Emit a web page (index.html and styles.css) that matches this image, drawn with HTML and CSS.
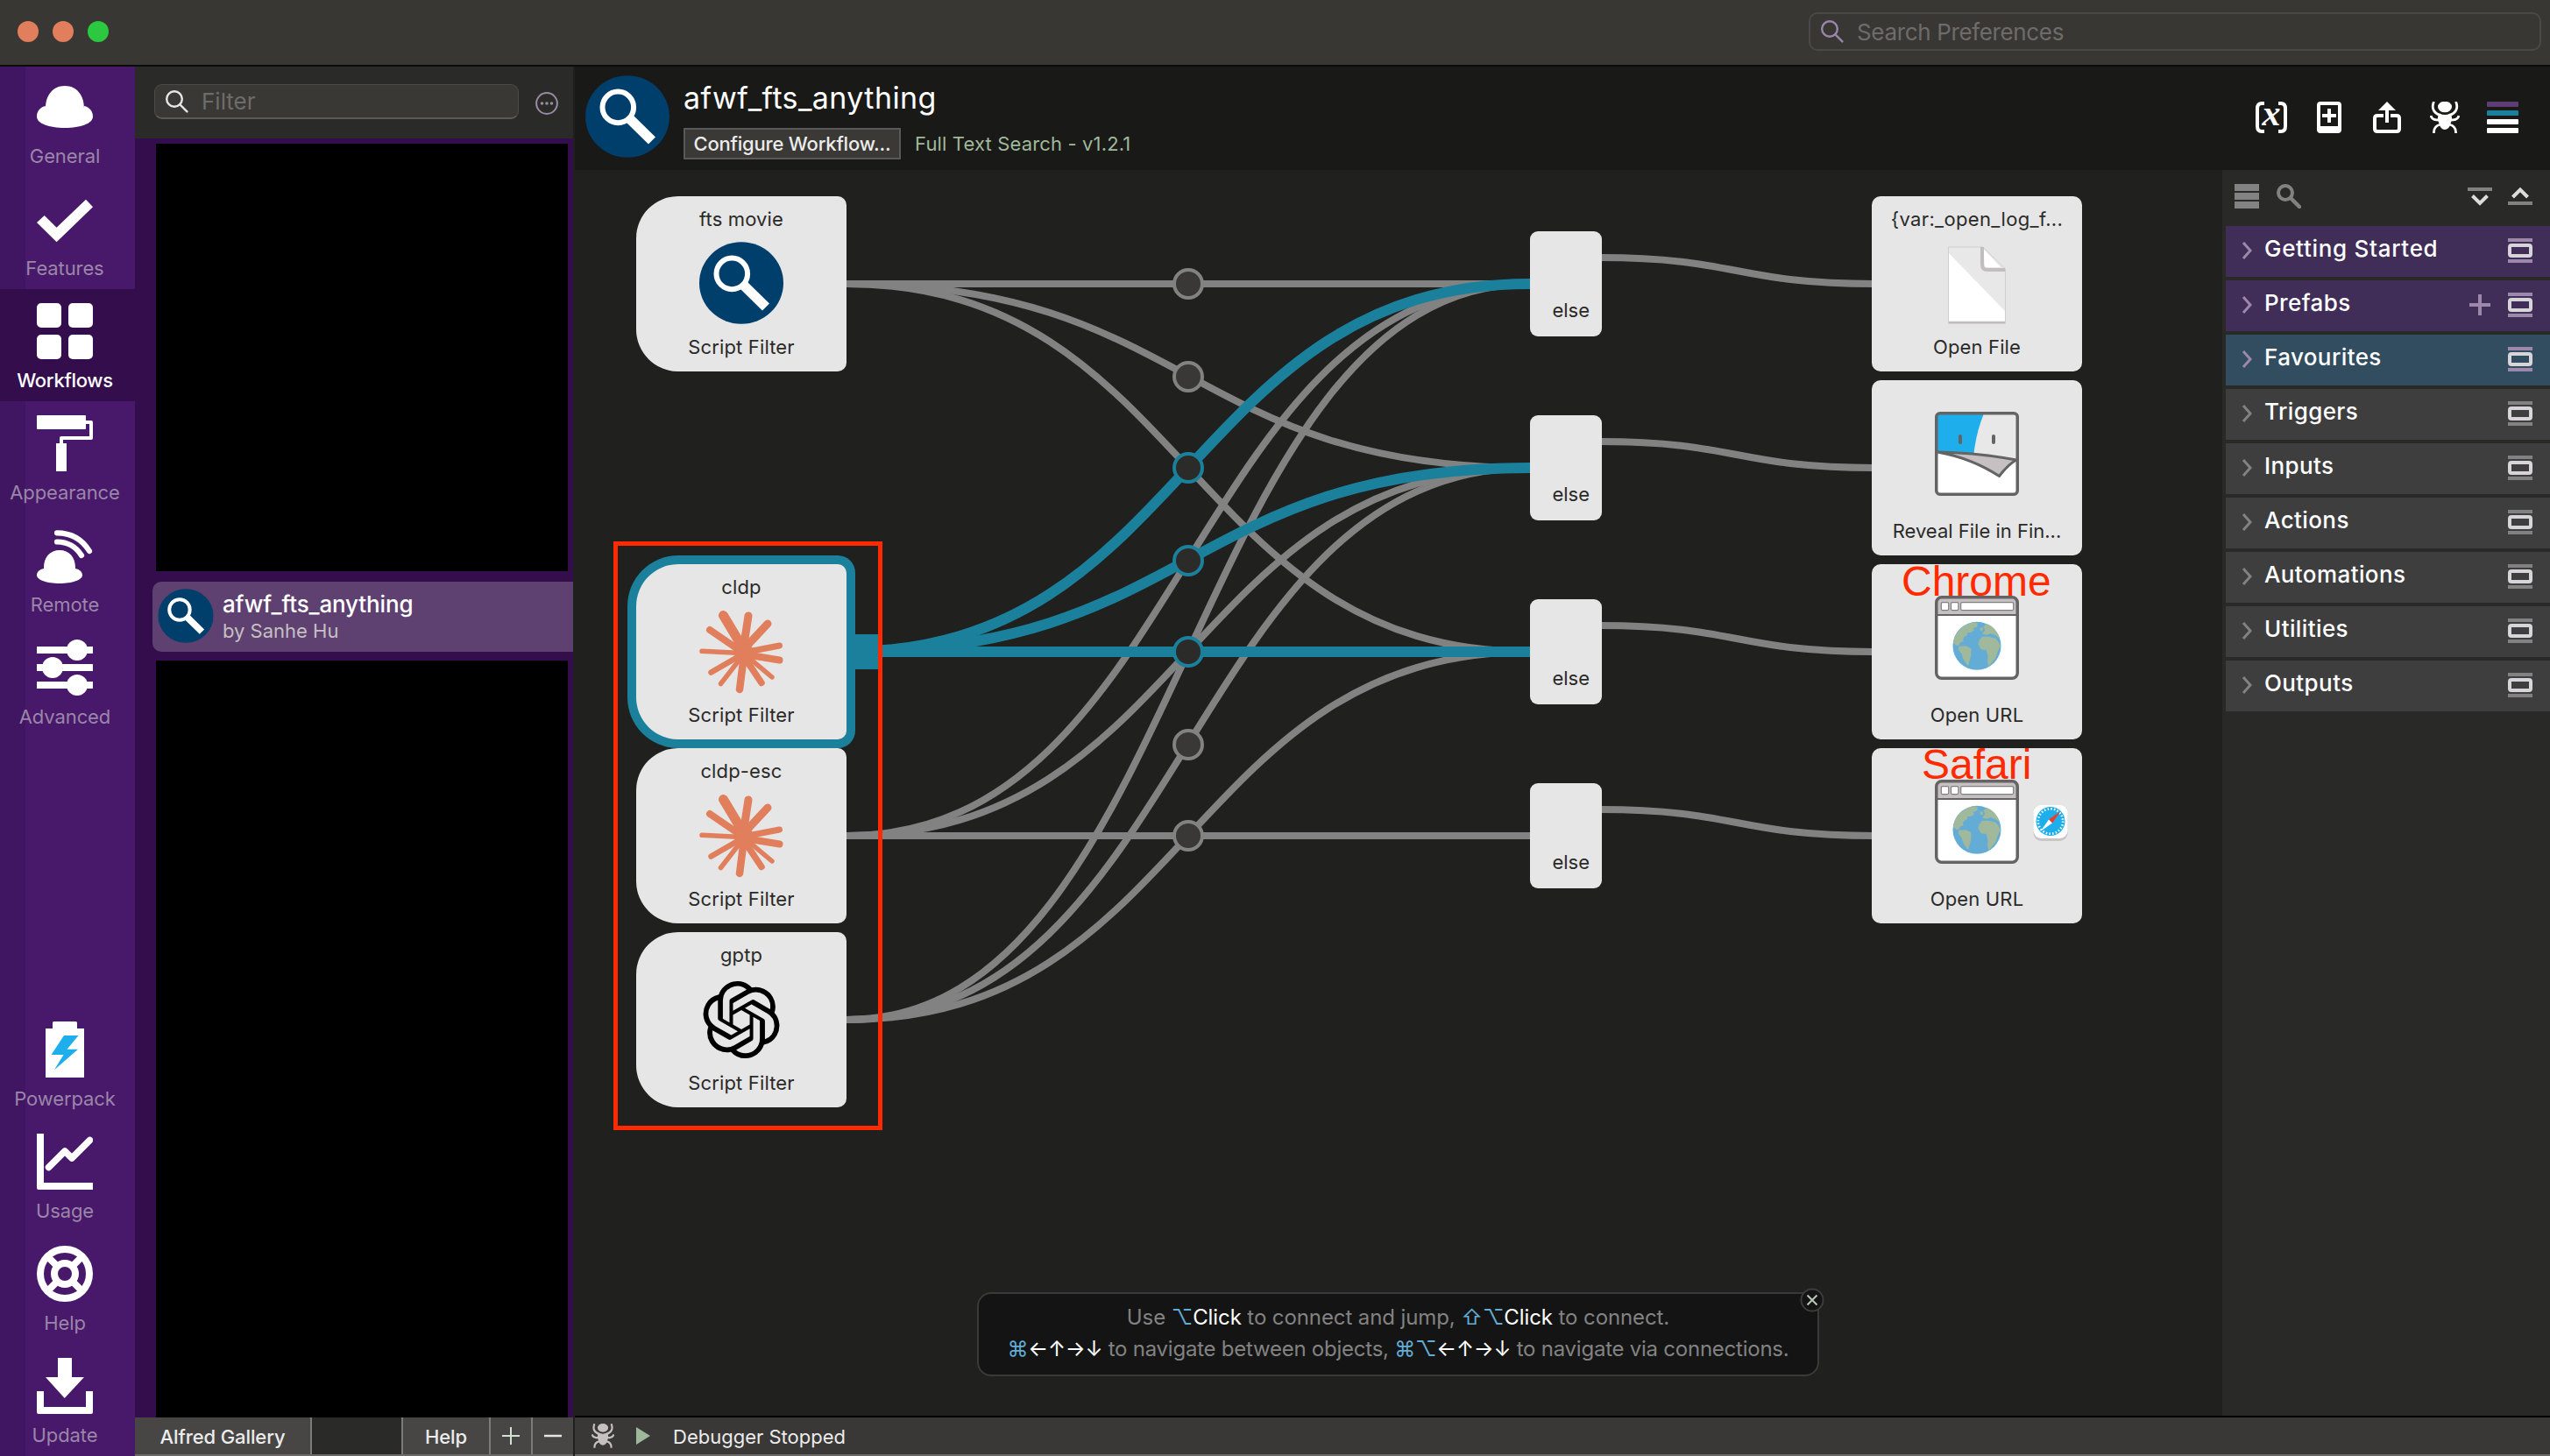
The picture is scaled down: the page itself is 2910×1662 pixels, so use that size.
FILE: index.html
```html
<!DOCTYPE html>
<html lang="en">
<head>
<meta charset="utf-8">
<title>Alfred Preferences</title>
<link rel="stylesheet" href="styles.css">
</head>
<body>
<svg class="defs" width="0" height="0" aria-hidden="true">
  <defs>
    <symbol id="i-lens" viewBox="0 0 26 26"><circle cx="10" cy="10" r="8.8"/><path d="M16.4 16.4L24.4 24.4"/></symbol>
    <symbol id="i-fts" viewBox="0 0 96 94">
      <ellipse cx="48" cy="47" rx="48" ry="46.8" fill="#003e6b"/>
      <circle cx="37.3" cy="36.4" r="17.8" fill="none" stroke="#fff" stroke-width="6"/>
      <path d="M49.5 48.5L76 74.5" stroke="#fff" stroke-width="11.5"/>
    </symbol>
    <symbol id="i-burst" viewBox="0 0 96 96">
      <g stroke="#e17e5b" stroke-linecap="round" fill="#e17e5b">
        <path stroke-width="11" d="M27.5 6.5L50 44"/>
        <path stroke-width="9" d="M56 7L50 46"/>
        <path stroke-width="9" d="M78 16L50 46"/>
        <path stroke-width="7" d="M91.5 41L50 49"/>
        <path stroke-width="8" d="M91.5 57.5L52 51"/>
        <path stroke-width="5.5" d="M83 77L52 51"/>
        <path stroke-width="7.5" d="M71 83.500L50 52"/>
        <path stroke-width="8.500" d="M46 91L51 52"/>
        <path stroke-width="5.5" d="M24.500 84.500L49 53"/>
        <path stroke-width="6.500" d="M13.500 71.500L49 51"/>
        <path stroke-width="5.5" d="M3 47.300L48 49.500"/>
        <path stroke-width="8" d="M12 23L47 47"/>
        <circle cx="51" cy="49" r="11" stroke="none"/>
      </g>
    </symbol>
    <symbol id="i-knot" viewBox="0 0 24 24"><path d="M22.2819 9.8211a5.9847 5.9847 0 0 0-.5157-4.9108 6.0462 6.0462 0 0 0-6.5098-2.9A6.0651 6.0651 0 0 0 4.9807 4.1818a5.9847 5.9847 0 0 0-3.9977 2.9 6.0462 6.0462 0 0 0 .7427 7.0966 5.98 5.98 0 0 0 .511 4.9107 6.051 6.051 0 0 0 6.5146 2.9001A5.9847 5.9847 0 0 0 13.2599 24a6.0557 6.0557 0 0 0 5.7718-4.2058 5.9894 5.9894 0 0 0 3.9977-2.9001 6.0557 6.0557 0 0 0-.7475-7.0729zm-9.022 12.6081a4.4755 4.4755 0 0 1-2.8764-1.0408l.1419-.0804 4.7783-2.7582a.7948.7948 0 0 0 .3927-.6813v-6.7369l2.02 1.1686a.071.071 0 0 1 .038.052v5.5826a4.504 4.504 0 0 1-4.4945 4.4944zm-9.6607-4.1254a4.4708 4.4708 0 0 1-.5346-3.0137l.142.0852 4.783 2.7582a.7712.7712 0 0 0 .7806 0l5.8428-3.3685v2.3324a.0804.0804 0 0 1-.0332.0615L9.74 19.9502a4.4992 4.4992 0 0 1-6.1408-1.6464zM2.3408 7.8956a4.485 4.485 0 0 1 2.3655-1.9728V11.6a.7664.7664 0 0 0 .3879.6765l5.8144 3.3543-2.0201 1.1685a.0757.0757 0 0 1-.071 0l-4.8303-2.7865A4.504 4.504 0 0 1 2.3408 7.872zm16.5963 3.8558L13.1038 8.364 15.1192 7.2a.0757.0757 0 0 1 .071 0l4.8303 2.7913a4.4944 4.4944 0 0 1-.6765 8.1042v-5.6772a.79.79 0 0 0-.407-.667zm2.0107-3.0231l-.142-.0852-4.7735-2.7818a.7759.7759 0 0 0-.7854 0L9.409 9.2297V6.8974a.0662.0662 0 0 1 .0284-.0615l4.8303-2.7866a4.4992 4.4992 0 0 1 6.6802 4.66zM8.3065 12.863l-2.02-1.1638a.0804.0804 0 0 1-.038-.0567V6.0742a4.4992 4.4992 0 0 1 7.3757-3.4537l-.142.0805L8.704 5.459a.7948.7948 0 0 0-.3927.6813zm1.0976-2.3654l2.602-1.4998 2.6069 1.4998v2.9994l-2.5974 1.4997-2.6067-1.4997Z"/></symbol>
    <symbol id="i-web" viewBox="0 0 96 96">
      <rect x="1.75" y="1.75" width="92.500" height="92.500" rx="6" fill="#fff"/>
      <path d="M2 22V8a6 6 0 0 1 6-6H88a6 6 0 0 1 6 6V22Z" fill="#c6c0c3"/>
      <path d="M2 22H94" stroke="#646464" stroke-width="2"/>
      <g fill="#fff" stroke="#7f7f7f" stroke-width="1.200"><rect x="7.300" y="7.600" width="8.400" height="9" rx="1.500"/><rect x="18.500" y="7.600" width="8.400" height="9" rx="1.500"/><rect x="29.700" y="7.600" width="60" height="9" rx="1.500"/></g>
      <rect x="1.75" y="1.75" width="92.500" height="92.500" rx="6" fill="none" stroke="#646464" stroke-width="3.500"/>
      <circle cx="48" cy="57.300" r="27.500" fill="#62acd6"/>
      <g transform="scale(.33333) translate(-54 -120)" fill="#a0b89b">
        <path d="M187 211L200 214V226L184 232L190 238L178 246L165 246L166 254L154 262L150 270L153 276L140 281L136 290L128 290L117 283C120 250 145 218 187 211Z"/>
        <path d="M136 293L160 292L178 300V325L173 342L168 361L160 350L152 338L146 320L134 303Z"/>
        <path d="M216 251L226 236L220 226L232 216C255 224 270 245 277 268L262 256L245 250L232 254Z"/>
        <path d="M202 286L206 272L216 260H240L262 266L271 276L279 292L270 310L262 334L238 362L234 345L236 330L230 306L212 304Z"/>
        <path d="M210 228L220 230L217 242L208 238Z"/>
      </g>
    </symbol>
    <symbol id="i-bug" viewBox="0 0 34 36">
      <ellipse cx="17" cy="6" rx="8" ry="6.300"/>
      <path d="M11 13.500Q17 16.500 23 13.500Q27 18 23.500 25Q22 32 17 32Q12 32 10.500 25Q7 18 11 13.500Z"/>
      <g fill="none" stroke="currentColor" stroke-width="2.800"><path d="M4.500 0C1 8 5 13.500 12 15.500M29.500 0C33 8 29 13.500 22 15.500M1 16C2 21 7 21 11 21M33 16C32 21 27 21 23 21M4.500 36C4 30 8 27 12 26M29.500 36C30 30 26 27 22 26"/></g>
    </symbol>
    <symbol id="i-drag" viewBox="0 0 28 28"><path d="M0 0H28V4H0ZM0 24H28V28H0Z"/><rect x="2" y="8" width="24" height="12" rx="2" fill="none" stroke="#d8d5da" stroke-width="4"/></symbol>
    <symbol id="i-chev" viewBox="0 0 12 20"><path d="M2 1L10 10L2 19" fill="none" stroke="currentColor" stroke-width="3"/></symbol>
  </defs>
</svg>

<header class="titlebar">
  <div class="lights"><i></i><i></i><i class="green"></i></div>
  <div class="search"><svg class="lens" width="26" height="26"><use href="#i-lens"/></svg><span>Search Preferences</span></div>
</header>

<div class="window">
  <nav class="sidebar">
    <div class="item first"><svg viewBox="0 0 64 64"><path d="M10 34C10 19 18 8 32 8S54 19 54 34L54 31C60 32 64 37 64 43C64 51 50 56 32 56S0 51 0 43C0 37 4 32 10 31Z"/></svg><span>General</span></div>
    <div class="item"><svg viewBox="0 0 64 64"><path d="M0 36L8.700 28L22.600 41.700L56 9.700L64 18.300L22.600 58.300Z"/></svg><span>Features</span></div>
    <div class="item active"><svg viewBox="0 0 64 64"><rect width="28" height="28" rx="5"/><rect x="36" width="28" height="28" rx="5"/><rect y="36" width="28" height="28" rx="5"/><rect x="36" y="36" width="28" height="28" rx="5"/></svg><span>Workflows</span></div>
    <div class="item"><svg viewBox="0 0 64 64"><rect width="56" height="16" rx="1"/><path d="M56 8H62V26H28V33" fill="none" stroke="#fff" stroke-width="4" stroke-linejoin="round"/><path d="M22 32H34V64H22Z"/></svg><span>Appearance</span></div>
    <div class="item"><svg viewBox="0 0 64 64"><path d="M8 46C8 34 15 26 26 26S44 34 44 46L44 47C49 48 52 51 52 54.500C52 60 40 64 26 64S0 60 0 54.500C0 51 3 48 8 47Z"/><path d="M23 6.300C40 6.300 52 14 60 27M23 16.500C35 16.500 44 21 51 32" fill="none" stroke="#fff" stroke-width="6.200" stroke-linecap="round"/></svg><span>Remote</span></div>
    <div class="item"><svg viewBox="0 0 64 64"><path d="M0 8H64V16H0ZM0 28H64V36H0ZM0 48H64V56H0Z"/><circle cx="46" cy="12" r="12"/><circle cx="18" cy="32" r="12"/><circle cx="46" cy="52" r="12"/></svg><span>Advanced</span></div>
    <div class="item push"><svg viewBox="0 0 64 64"><path d="M18 8V1.500Q18 0 19.500 0H44.500Q46 0 46 1.500V8H54V64H10V8Z"/><path fill="#1eaeec" d="M31 16H47.500L34.500 31.800H47L20 55.300L30.500 38H16.500Z"/></svg><span>Powerpack</span></div>
    <div class="item"><svg viewBox="0 0 64 64"><path d="M0 0H8V56H64V64H2Q0 64 0 62Z"/><path d="M13.500 38.500L32 20L40 28L60.500 7.500" fill="none" stroke="#fff" stroke-width="7.500" stroke-linecap="round" stroke-linejoin="round"/></svg><span>Usage</span></div>
    <div class="item"><svg viewBox="0 0 64 64"><g fill="none" stroke="#fff" stroke-width="8"><circle cx="32" cy="32" r="28"/><circle cx="32" cy="32" r="12"/><path d="M12 12L23 23M52 12L41 23M12 52L23 41M52 52L41 41"/></g></svg><span>Help</span></div>
    <div class="item"><svg viewBox="0 0 64 64"><path d="M24 0H40V22H54L31.700 46L10 22H24Z"/><path d="M0 38H8V56H56V38H64V62Q64 64 62 64H2Q0 64 0 62Z"/></svg><span>Update</span></div>
  </nav>

  <section class="library">
    <div class="filterbar">
      <div class="filter"><svg class="lens" width="26" height="26"><use href="#i-lens"/></svg><span>Filter</span></div>
      <svg class="more" width="26" height="26" viewBox="0 0 26 26"><circle cx="13" cy="13" r="11.900" fill="none" stroke="#9a8aa4" stroke-width="2"/><circle cx="7.500" cy="13" r="1.800"/><circle cx="13" cy="13" r="1.800"/><circle cx="18.500" cy="13" r="1.800"/></svg>
    </div>
    <div class="list">
      <div class="redacted upper"></div>
      <div class="entry">
        <svg width="64" height="62" viewBox="0 0 96 94"><use href="#i-fts"/></svg>
        <div class="names"><b>afwf_fts_anything</b><span>by Sanhe Hu</span></div>
      </div>
      <div class="redacted lower"></div>
    </div>
    <footer class="actions">
      <span class="btn gallery">Alfred Gallery</span><span class="gap"></span><span class="btn help">Help</span>
      <span class="btn sq"><svg width="22" height="22" viewBox="0 0 22 22"><path d="M11 1V21M1 11H21" stroke="#d4e0d2" stroke-width="2"/></svg></span>
      <span class="btn sq last"><svg width="22" height="22" viewBox="0 0 22 22"><path d="M1 11H21" stroke="#e4e4e4" stroke-width="2.500"/></svg></span>
    </footer>
  </section>

  <main class="editor">
    <div class="head">
      <svg class="logo" width="96" height="94"><use href="#i-fts"/></svg>
      <div class="meta">
        <h1>afwf_fts_anything</h1>
        <div class="sub"><span class="configure">Configure Workflow...</span><span class="about">Full Text Search - v1.2.1</span></div>
      </div>
      <div class="tools">
        <svg width="36" height="36" viewBox="0 0 36 36"><path d="M10 2H7Q2 2 2 8V28Q2 34 7 34H10M26 2H29Q34 2 34 8V28Q34 34 29 34H26" fill="none" stroke="#fff" stroke-width="4"/><text class="varx" x="18" y="27" text-anchor="middle">x</text></svg>
        <svg width="28" height="36" viewBox="0 0 28 36"><path fill-rule="evenodd" d="M4 0H24Q28 0 28 4V32Q28 36 24 36H4Q0 36 0 32V4Q0 0 4 0ZM4 4V28H24V4Z"/><path d="M12 8H16V14H22V18H16V24H12V18H6V14H12Z"/></svg>
        <svg width="32" height="36" viewBox="0 0 32 36"><path d="M16 0L26 10H18V24H14V10H6Z"/><path d="M12 16H5Q2 16 2 19V31Q2 34 5 34H27Q30 34 30 31V19Q30 16 27 16H20" fill="none" stroke="#fff" stroke-width="4"/></svg>
        <svg width="34" height="36"><use href="#i-bug"/></svg>
        <svg width="36" height="36" viewBox="0 0 36 36"><rect width="36" height="6" rx="1" fill="#5d3d73"/><rect y="10" width="36" height="6" rx="1" fill="#1b809b"/><rect y="20" width="36" height="6" rx="1"/><rect y="30" width="36" height="6" rx="1"/></svg>
      </div>
    </div>

    <div class="body">
      <div class="canvas">
        <svg class="wires" viewBox="656 194 1880 1422" width="1880" height="1422">
          <g class="wire">
            <path d="M960 324H1750"/>
            <path d="M966 324C1356 324 1356 534 1746 534"/>
            <path d="M966 324C1356 324 1356 744 1746 744"/>
            <path d="M966 954C1356 954 1356 324 1746 324"/>
            <path d="M966 954C1356 954 1356 534 1746 534"/>
            <path d="M960 954H1750"/>
            <path d="M966 1164C1356 1164 1356 324 1746 324"/>
            <path d="M966 1164C1356 1164 1356 534 1746 534"/>
            <path d="M966 1164C1356 1164 1356 744 1746 744"/>
            <path d="M1826 294C1982 294 1982 324 2138 324"/>
            <path d="M1826 504C1982 504 1982 534 2138 534"/>
            <path d="M1826 714C1982 714 1982 744 2138 744"/>
            <path d="M1826 924C1982 924 1982 954 2138 954"/>
          </g>
          <g class="wire hot">
            <path d="M966 744C1356 744 1356 324 1746 324"/>
            <path d="M966 744C1356 744 1356 534 1746 534"/>
            <path d="M966 744H1750"/>
          </g>
          <g class="knob"><circle cx="1356" cy="324" r="16"/><circle cx="1356" cy="430" r="16"/><circle cx="1356" cy="850" r="16"/><circle cx="1356" cy="954" r="16"/></g>
          <g class="knob hot"><circle cx="1356" cy="534" r="16"/><circle cx="1356" cy="640" r="16"/><circle cx="1356" cy="744" r="16"/></g>
          <rect x="970" y="724" width="34" height="40" rx="3" fill="#1b809b"/>
        </svg>

        <div class="node script c1 r1"><span class="t">fts movie</span><svg width="96" height="94"><use href="#i-fts"/></svg><span class="l">Script Filter</span></div>
        <div class="node script c1 r3 selected"><span class="t">cldp</span><svg width="96" height="96"><use href="#i-burst"/></svg><span class="l">Script Filter</span></div>
        <div class="node script c1 r4"><span class="t">cldp-esc</span><svg width="96" height="96"><use href="#i-burst"/></svg><span class="l">Script Filter</span></div>
        <div class="node script c1 r5"><span class="t">gptp</span><svg class="knot" width="88" height="88"><use href="#i-knot"/></svg><span class="l">Script Filter</span></div>

        <div class="else e1">else</div><div class="else e2">else</div><div class="else e3">else</div><div class="else e4">else</div>

        <div class="node c3 r1"><span class="t wide">{var:_open_log_f...</span>
          <svg width="96" height="96" viewBox="0 0 96 96"><path d="M15.500 92H80.500" stroke="#bdb9bb" stroke-width="3"/><path d="M15.500 6H55L80.500 31V91H15.500Z" fill="#e9e8e9" stroke="#d0cecf"/><path d="M16 13L80 79V90.500H16Z" fill="#fff"/><path d="M54 6V26Q54 32 60 32H80" fill="none" stroke="#c2bec0" stroke-width="4"/><path d="M56 9Q56 27 57.500 29H75Z" fill="#fff"/></svg>
          <span class="l">Open File</span></div>
        <div class="node c3 r2 bare">
          <svg width="96" height="96" viewBox="0 0 96 96"><rect x="1.75" y="1.75" width="92.500" height="92.500" rx="4" fill="#fff"/><path d="M2 2H94V55Q50 46 2 46Z" fill="#e9e8e9"/><path d="M2 2H56Q47 24 44.500 48Q22 46 2 46Z" fill="#1eaeec"/><path d="M3 46Q50 47 93 55Q84 60 73.500 73.500Q42 53 3 46Z" fill="#c6c0c3" stroke="#646464" stroke-width="3" stroke-linejoin="round"/><path d="M29 28V35M67 28V35" stroke="#646464" stroke-width="4" stroke-linecap="round"/><rect x="1.75" y="1.75" width="92.500" height="92.500" rx="4" fill="none" stroke="#646464" stroke-width="3.500"/></svg>
          <span class="l reveal">Reveal File in Fin...</span></div>
        <div class="node c3 r3 bare"><svg width="96" height="96"><use href="#i-web"/></svg><span class="l">Open URL</span></div>
        <div class="node c3 r4 bare"><svg width="96" height="96"><use href="#i-web"/></svg><span class="l">Open URL</span>
          <svg class="safari" width="40" height="41" viewBox="0 0 40 41"><rect x=".5" y="3" width="39" height="38" rx="9" fill="#c9c6c8"/><rect x=".5" width="39" height="38" rx="9" fill="#fff"/><circle cx="20" cy="18.500" r="16.500" fill="#1eaeec"/><circle cx="20" cy="18.500" r="14.200" fill="none" stroke="#fff" stroke-width="2.600" stroke-dasharray="1.500 2.210"/><path d="M31.500 7L22 20.500L18 16.500Z" fill="#ee3b24"/><path d="M8.500 30L18 16.500L22 20.500Z" fill="#fff"/></svg></div>

        <div class="frame"></div>
        <div class="note chrome">Chrome</div>
        <div class="note saf">Safari</div>

        <div class="hint">
          <p>Use <em>⌥</em><b>Click</b> to connect and jump, <em>⇧⌥</em><b>Click</b> to connect.</p>
          <p class="keys"><em>⌘</em><b>←↑→↓</b> to navigate between objects, <em>⌘⌥</em><b>←↑→↓</b> to navigate via connections.</p>
          <svg class="close" width="28" height="28" viewBox="0 0 28 28"><circle cx="14" cy="14" r="12.500" fill="#141414" stroke="#3c3c3a" stroke-width="2"/><path d="M8.500 8.500L19.500 19.500M19.500 8.500L8.500 19.500" stroke="#b9c7b7" stroke-width="2"/></svg>
        </div>
      </div>

      <aside class="palette">
        <div class="bar">
          <svg width="28" height="28" viewBox="0 0 28 28"><path d="M0 0H28V8H0ZM0 10H28V18H0ZM0 20H28V28H0Z"/></svg>
          <svg width="28" height="28" viewBox="0 0 28 28"><circle cx="10" cy="10" r="8" fill="none" stroke="#828282" stroke-width="4"/><path d="M17 17L26 26" stroke="#828282" stroke-width="4.500" stroke-linecap="round"/></svg>
          <svg class="fold" width="28" height="28" viewBox="0 0 28 28"><path d="M0 4H28V8H0Z"/><path d="M5.500 13.500L14 22L22.500 13.500" fill="none" stroke="#dcdcdc" stroke-width="4"/></svg>
          <svg width="28" height="28" viewBox="0 0 28 28"><path d="M0 20H28V24H0Z"/><path d="M5.500 15L14 6.500L22.500 15" fill="none" stroke="#dcdcdc" stroke-width="4"/></svg>
        </div>
        <div class="cat violet"><svg class="ch" width="12" height="20"><use href="#i-chev"/></svg><span>Getting Started</span><svg class="dr" width="28" height="28"><use href="#i-drag"/></svg></div>
        <div class="cat violet"><svg class="ch" width="12" height="20"><use href="#i-chev"/></svg><span>Prefabs</span><svg class="plus" width="24" height="24" viewBox="0 0 24 24"><path d="M10 0H14V10H24V14H14V24H10V14H0V10H10Z"/></svg><svg class="dr" width="28" height="28"><use href="#i-drag"/></svg></div>
        <div class="cat blue"><svg class="ch" width="12" height="20"><use href="#i-chev"/></svg><span>Favourites</span><svg class="dr" width="28" height="28"><use href="#i-drag"/></svg></div>
        <div class="cat"><svg class="ch" width="12" height="20"><use href="#i-chev"/></svg><span>Triggers</span><svg class="dr" width="28" height="28"><use href="#i-drag"/></svg></div>
        <div class="cat"><svg class="ch" width="12" height="20"><use href="#i-chev"/></svg><span>Inputs</span><svg class="dr" width="28" height="28"><use href="#i-drag"/></svg></div>
        <div class="cat"><svg class="ch" width="12" height="20"><use href="#i-chev"/></svg><span>Actions</span><svg class="dr" width="28" height="28"><use href="#i-drag"/></svg></div>
        <div class="cat"><svg class="ch" width="12" height="20"><use href="#i-chev"/></svg><span>Automations</span><svg class="dr" width="28" height="28"><use href="#i-drag"/></svg></div>
        <div class="cat"><svg class="ch" width="12" height="20"><use href="#i-chev"/></svg><span>Utilities</span><svg class="dr" width="28" height="28"><use href="#i-drag"/></svg></div>
        <div class="cat"><svg class="ch" width="12" height="20"><use href="#i-chev"/></svg><span>Outputs</span><svg class="dr" width="28" height="28"><use href="#i-drag"/></svg></div>
      </aside>
    </div>

    <footer class="debug">
      <svg class="bug" width="26" height="28"><use href="#i-bug"/></svg>
      <svg width="16" height="20" viewBox="0 0 16 20"><path d="M0 0L16 10L0 20Z" fill="#9db89a"/></svg>
      <span>Debugger Stopped</span>
    </footer>
  </main>
</div>
</body>
</html>
```
FILE: styles.css
```css
* { box-sizing: border-box; }
html, body { margin: 0; height: 100%; }
body {
  display: flex; flex-direction: column;
  width: 2910px; height: 1662px; overflow: hidden;
  background: #20201e; color: #fff;
  font: 22px/26px Inter, "Noto Sans", sans-serif;
}
svg { display: block; flex: none; fill: currentColor; }
.defs { position: absolute; }
p, h1 { margin: 0; font-weight: 400; }
b { font-weight: 400; }

.titlebar {
  flex: none; height: 76px; padding: 0 10px 2px 20px;
  display: flex; align-items: center; justify-content: space-between;
  background: #393734; border-bottom: 2px solid #0b0b0a;
}
.lights { display: flex; gap: 16px; }
.lights i { width: 24px; height: 24px; border-radius: 50%; background: #e17e5b; }
.lights .green { background: #2bc840; }
.lens { fill: none; stroke: currentColor; stroke-width: 2.4; stroke-linecap: round; }
.search {
  width: 836px; height: 44px; padding: 0 12px; display: flex; align-items: center; gap: 15px;
  border: 2px solid #4a4947; border-radius: 10px; color: #9a86a8; font-size: 26px;
}
.search span, .filter span { color: #6e6c6a; }
.search span { letter-spacing: -.35px; margin-top: 2px; }

.window { flex: 1; display: flex; min-height: 0; }

.sidebar {
  width: 154px; flex: none; display: flex; flex-direction: column;
  background: linear-gradient(90deg, #401562 29px, #48186a 29px);
}
.item { height: 128px; padding: 16px 6px 0 0; display: flex; flex-direction: column; align-items: center; gap: 11px; color: #9a86a8; }
.item svg { width: 64px; height: 64px; fill: #fff; }
.item.first { height: 126px; padding-top: 14px; }
.item.active { background: #340d4d; color: #fff; }
.item.active span { font-weight: 500; letter-spacing: -.3px; }
.item span { letter-spacing: -.1px; }
.push { margin-top: auto; }

.library { width: 500px; flex: none; display: flex; flex-direction: column; background: #2a2a28; }
.filterbar { height: 82px; padding: 0 16px 2px 22px; display: flex; align-items: center; gap: 19px; }
.filter {
  width: 416px; height: 40px; padding: 0 12px; display: flex; align-items: center; gap: 15px;
  background: #3a3835; border: 1px solid #4c4b49; border-bottom: 2px solid #5b5a58; border-radius: 9px; font-size: 26px; color: #e6e6e6;
}
.more { fill: #9a8aa4; margin-top: 4px; }
.list { flex: 1; padding-top: 6px; display: flex; flex-direction: column; background: #340d4d; }
.redacted { background: #000; margin: 0 6px 0 24px; }
.upper { height: 488px; margin-bottom: 12px; }
.lower { flex: 1; margin-top: 10px; }
.entry { height: 80px; margin-left: 20px; padding: 0 0 0 6px; display: flex; align-items: center; gap: 10px; background: #5e4071; border-radius: 10px 0 0 10px; }
.entry svg { margin-top: -2px; }
.names { display: flex; flex-direction: column; gap: 2px; }
.names b { font-size: 26px; line-height: 30px; font-weight: 500; letter-spacing: -.15px; }
.names span { color: #c6c0c3; line-height: 26px; }
.actions { height: 44px; display: flex; background: #2a2a28; border-bottom: 2px solid #6b6a69; }
.btn { background: #474644; border-right: 2px solid #7c7b7a; padding-top: 2px; display: flex; align-items: center; justify-content: center; color: #ececec; font-weight: 500; letter-spacing: -.1px; }
.gallery { width: 202px; }
.gap { width: 104px; border-right: 2px solid #7c7b7a; }
.help { width: 100px; }
.sq { width: 48px; padding-top: 0; }
.last { flex: 1; border: 0; }

.editor { flex: 1; min-width: 0; display: flex; flex-direction: column; border-left: 2px solid #20201e; }
.head { flex: none; height: 118px; padding: 0 36px 0 12px; display: flex; background: #191917; }
.logo { margin-top: 10px; }
.meta { margin-left: 16px; }
.meta h1 { font-size: 34px; line-height: 40px; margin-top: 16px; letter-spacing: .4px; }
.sub { display: flex; align-items: center; gap: 16px; margin-top: 14px; }
.configure { width: 248px; height: 36px; border: 2px solid #5a5957; background: #3a3936; display: flex; align-items: center; justify-content: center; white-space: nowrap; color: #ececec; font-weight: 500; letter-spacing: -.2px; }
.about { color: #a0b89b; letter-spacing: .15px; }
.tools { margin-left: auto; display: flex; margin-top: 40px; }
.tools svg { overflow: visible; }
.tools svg:nth-child(2) { margin-left: 34px; }
.tools svg:nth-child(3) { margin-left: 36px; }
.tools svg:nth-child(4) { margin-left: 33px; }
.tools svg:nth-child(5) { margin-left: 31px; }
.varx { font: italic 700 42px "Liberation Serif", serif; }

.body { flex: 1; min-height: 0; display: flex; }
.canvas { flex: 1; position: relative; }
.wires { position: absolute; left: 0; top: 0; }
.wire { fill: none; stroke: #828282; stroke-width: 8; }
.wire.hot { stroke: #1b809b; stroke-width: 12; }
.knob { fill: #393836; stroke: #828282; stroke-width: 4; }
.knob.hot { fill: #2b2b29; stroke: #1b809b; }

.node {
  position: absolute; width: 240px; height: 200px; padding-top: 13px;
  display: flex; flex-direction: column; align-items: center;
  background: #e6e6e6; border-radius: 10px; color: #2a2a28; letter-spacing: .15px;
}
.node .t { height: 26px; white-space: nowrap; }
.node .wide { letter-spacing: .35px; }
.node .reveal { letter-spacing: 0; }
.node > svg { margin-top: 13px; }
.node .l { position: absolute; top: 159px; white-space: nowrap; }
.node.bare { padding-top: 23px; }
.script { border-radius: 48px 10px 10px 48px; }
.selected { box-shadow: 0 0 0 10px #1b809b; }
.node .knot { margin-top: 17px; fill: #000; }
.node .safari { position: absolute; left: 184px; top: 65px; margin: 0; }
.c1 { left: 70px; }
.c3 { left: 1480px; }
.r1 { top: 30px; }
.r2 { top: 240px; }
.r3 { top: 450px; }
.r4 { top: 660px; }
.r5 { top: 870px; }
.else { position: absolute; left: 1090px; width: 82px; height: 120px; padding: 77px 14px 0 0; text-align: right; background: #e6e6e6; border-radius: 9px; color: #2a2a28; }
.e1 { top: 70px; }
.e2 { top: 280px; }
.e3 { top: 490px; }
.e4 { top: 700px; }
.frame { position: absolute; left: 44px; top: 424px; width: 307px; height: 672px; border: 5px solid #ff2a00; }
.note { position: absolute; font: 48px/48px "Liberation Sans", Arial, sans-serif; color: #ff2a00; white-space: nowrap; }
.chrome { left: 1514px; top: 446px; }
.saf { left: 1537px; top: 655px; }

.hint {
  position: absolute; left: 459px; top: 1281px; width: 961px; height: 96px; padding-top: 9px;
  background: #141414; border: 2px solid #3a3a38; border-radius: 16px;
  color: #828282; font-size: 24px; line-height: 36px; text-align: center; white-space: nowrap; letter-spacing: -.1px;
}
.hint .keys { letter-spacing: -.24px; }
.hint em { font-style: normal; color: #62acd6; }
.hint b { color: #fff; }
.close { position: absolute; right: -8px; top: -7px; }

.palette { width: 374px; flex: none; padding-left: 4px; display: flex; flex-direction: column; gap: 4px; background: #292927; }
.bar { height: 60px; padding: 16px 20px 0 10px; display: flex; gap: 20px; fill: #828282; color: #828282; }
.fold { margin-left: auto; margin-right: -2px; }
.cat { height: 58px; padding: 0 20px 0 18px; display: flex; align-items: center; background: #3e3e3e; color: #828282; }
.cat span { margin: -7px auto 0 14px; color: #fff; font-size: 26px; font-weight: 500; letter-spacing: .4px; }
.cat:nth-child(2) span { letter-spacing: .7px; }
.cat svg { margin-top: -2px; }
.violet { background: #402d58; color: #9d88ab; }
.blue { background: #324d60; color: #9d88ab; }
.cat .plus { margin-right: 20px; }

.debug { flex: none; height: 46px; padding-left: 19px; display: flex; align-items: center; background: #393836; border-top: 2px solid #000; border-bottom: 2px solid #6b6a69; color: #ececec; }
.bug { margin-right: 25px; color: #c6c0c3; }
.debug span { margin: 2px 0 0 26px; }
```
